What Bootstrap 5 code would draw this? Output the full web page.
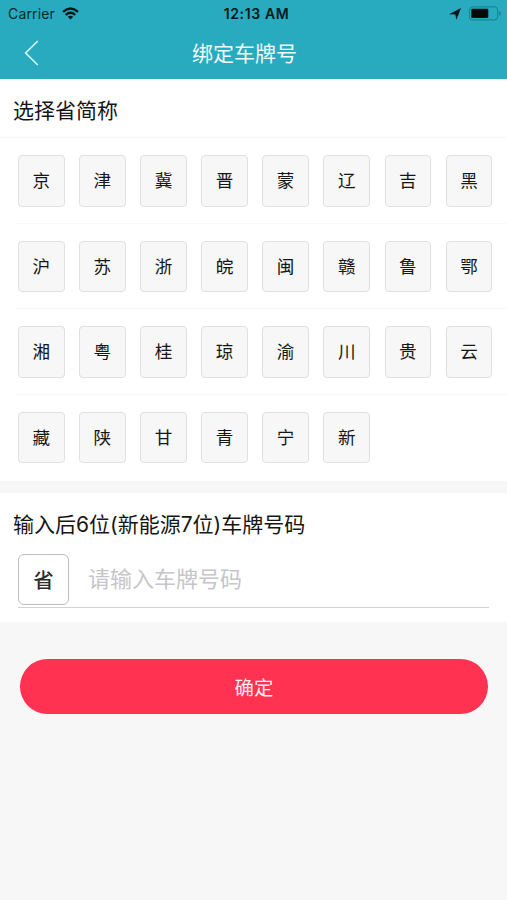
<!DOCTYPE html>
<html lang="zh-CN">
<head>
<meta charset="utf-8">
<meta name="viewport" content="width=device-width, initial-scale=1">
<title>绑定车牌号</title>
<link href="https://cdn.jsdelivr.net/npm/bootstrap@5.3.0/dist/css/bootstrap.min.css" rel="stylesheet">
<style>
body{background:#f7f7f7;color:#161616;font-family:Inter,"Noto Sans CJK SC",sans-serif;min-height:900px;overflow-x:hidden}
.app-top{background:#28abbf;height:79px}
.status{height:27px;color:#07282d;font-size:14px;line-height:27px;padding:0 6px 0 8px}
.status .side{flex:1 1 0}
.carrier{letter-spacing:.15px}
.wifi{margin-left:7px}
.clock{font-weight:600;color:#04181b;letter-spacing:.65px;transform:translateX(2px)}
.titlebar{height:52px;padding:0 24px}
.titlebar .side{flex:1 1 0}
.page-title{font-size:21px;line-height:30px;color:#f2fbfc;margin:2px 0 0;font-weight:400;transform:translateX(-9px)}
.sect-title{font-size:21px;line-height:30px;font-weight:400;margin:0;padding-left:13px}
.pick-title{height:58.4px;padding-top:17px}
.prov-row{display:grid;grid-template-columns:repeat(8,46.6px);column-gap:14.5px;height:85.5px;padding:17px 0 0 3px;margin-left:15px;border-top:1px solid #f8f8f8}
.prov-row.first{margin-left:0;padding-left:18px}
.prov-row:last-child{height:87px}
.prov{height:51.5px;padding:0;border:1px solid #e0e0e0;border-radius:4px;background:#f7f7f7;color:#161616;font-size:17.6px;line-height:50.4px}
.plate{margin-top:12.6px;height:129px;padding-top:17px}
.plate-line{margin:13.5px 18px 0 18px;height:54.5px;border-bottom:1.5px solid #d2d2d4}
.prov-box{width:51px;height:51px;border:1.5px solid #bdbdbd;border-radius:6px;font-size:20.5px;font-weight:500;line-height:51px;color:#2c2c2c;background:#fff;padding:0}
.plate-input{font-size:22px;line-height:30px;height:51px;padding:0 0 0 19px}
.plate-input::placeholder{color:#c5c5ca;opacity:1}
.plate-input:focus{box-shadow:none}
.submit{height:55px;margin:36.5px 19px 0 20px;background:#ff3252;color:#ffeef1;font-size:19.4px;border:0;padding:2px 0 0;line-height:55px}
</style>
</head>
<body>
<header class="app-top">
  <div class="status d-flex align-items-center">
    <div class="side d-flex align-items-center">
      <span class="carrier">Carrier</span>
      <svg class="wifi" width="17" height="13" viewBox="0 0 17 13" fill="none" stroke="#04181b" stroke-width="2.3"><path d="M1 4.8Q8.5-1.8 16 4.8M3.7 7.8Q8.5 3.6 13.3 7.8"/><path d="M8.5 12.5L5.8 9.8Q8.5 7.7 11.2 9.8Z" fill="#04181b" stroke="none"/></svg>
    </div>
    <span class="clock">12:13 AM</span>
    <div class="side d-flex align-items-center justify-content-end">
      <svg class="me-2" width="12" height="12" viewBox="0 0 12 12"><path d="M12 0L7.4 11.8 6.3 6.6 0 6.2Z" fill="#04181b"/></svg>
      <svg width="32" height="15" viewBox="0 0 32 15"><rect x=".6" y=".9" width="28" height="13" rx="3" fill="none" stroke="#1a7e8d"/><rect x="2.3" y="2.7" width="17" height="9.4" rx="1" fill="#020a0b"/><path d="M30 5v5q1.7-.8 1.7-2.5T30 5Z" fill="#1a7e8d"/></svg>
    </div>
  </div>
  <nav class="titlebar d-flex align-items-center">
    <div class="side d-flex"><svg width="16" height="26" viewBox="0 0 16 26" fill="none" stroke="#d9f4f7" stroke-width="1.6"><path d="M13.8 1L1.6 13 13.8 25"/></svg></div>
    <h1 class="page-title">绑定车牌号</h1>
    <div class="side"></div>
  </nav>
</header>
<main>
  <section class="bg-white">
    <h2 class="sect-title pick-title">选择省简称</h2>
    <div class="prov-row first"><button class="btn prov">京</button><button class="btn prov">津</button><button class="btn prov">冀</button><button class="btn prov">晋</button><button class="btn prov">蒙</button><button class="btn prov">辽</button><button class="btn prov">吉</button><button class="btn prov">黑</button></div>
    <div class="prov-row"><button class="btn prov">沪</button><button class="btn prov">苏</button><button class="btn prov">浙</button><button class="btn prov">皖</button><button class="btn prov">闽</button><button class="btn prov">赣</button><button class="btn prov">鲁</button><button class="btn prov">鄂</button></div>
    <div class="prov-row"><button class="btn prov">湘</button><button class="btn prov">粤</button><button class="btn prov">桂</button><button class="btn prov">琼</button><button class="btn prov">渝</button><button class="btn prov">川</button><button class="btn prov">贵</button><button class="btn prov">云</button></div>
    <div class="prov-row"><button class="btn prov">藏</button><button class="btn prov">陕</button><button class="btn prov">甘</button><button class="btn prov">青</button><button class="btn prov">宁</button><button class="btn prov">新</button></div>
  </section>
  <section class="plate bg-white">
    <h2 class="sect-title">输入后6位(新能源7位)车牌号码</h2>
    <div class="plate-line d-flex">
      <button class="btn prov-box flex-shrink-0">省</button>
      <input class="form-control border-0 bg-transparent plate-input" type="text" placeholder="请输入车牌号码">
    </div>
  </section>
  <div class="d-grid"><button class="btn rounded-pill submit">确定</button></div>
</main>
<script src="https://cdn.jsdelivr.net/npm/bootstrap@5.3.0/dist/js/bootstrap.bundle.min.js"></script>
</body>
</html>
